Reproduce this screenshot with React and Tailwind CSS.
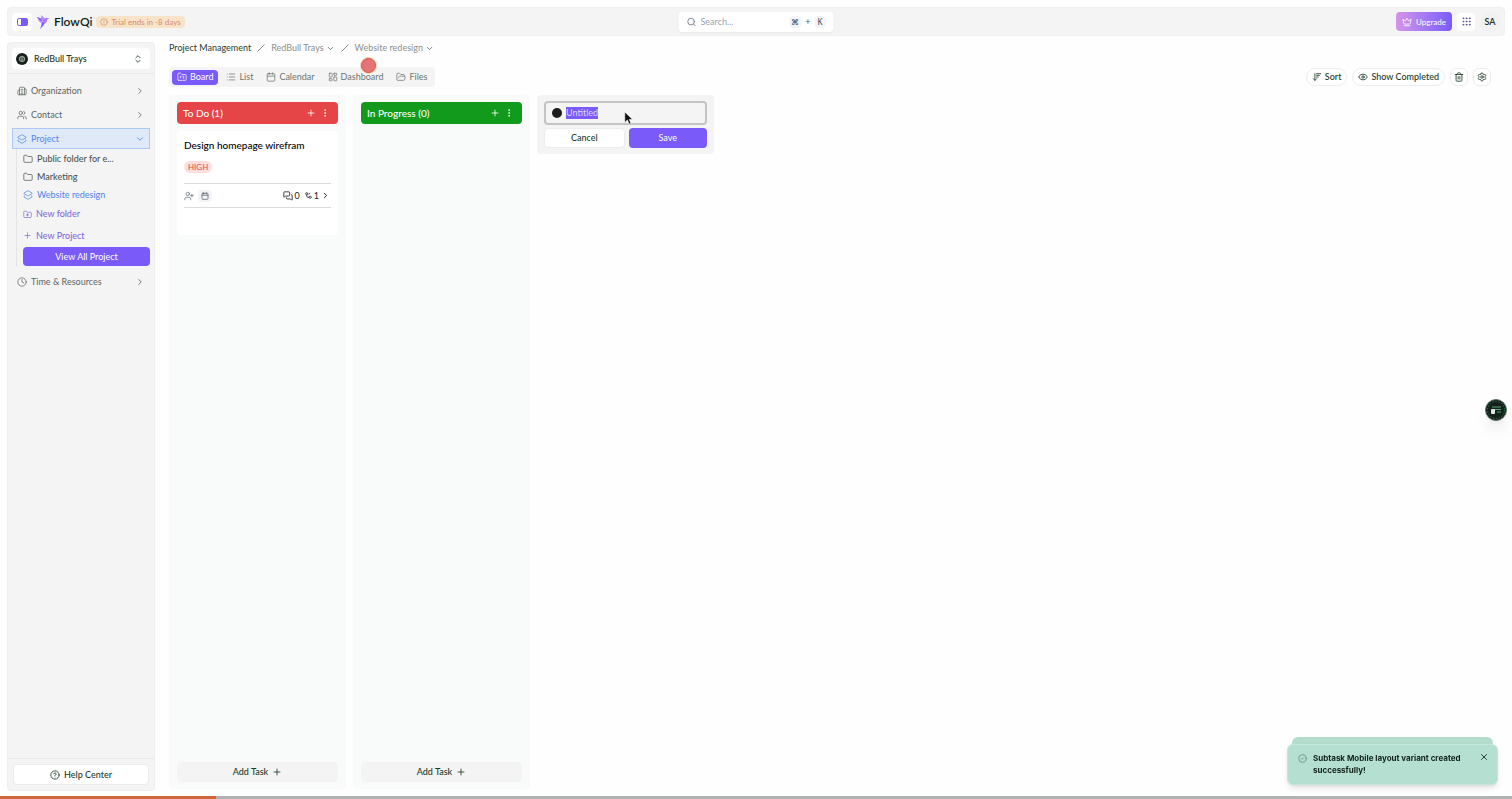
import {
  ArrowDownWideNarrow,
  Calendar,
  ChevronDown,
  ChevronRight,
  ChevronsUpDown,
  CircleAlert,
  CircleCheck,
  CircleHelp,
  Clock,
  Crown,
  EllipsisVertical,
  Eye,
  Folder,
  FolderKanban,
  FolderOpen,
  FolderPlus,
  Grip,
  Layers2,
  LayoutDashboard,
  List,
  MessagesSquare,
  Plus,
  Search,
  Settings,
  Trash2,
  UserPlus,
  Users,
  Building2,
  X,
} from "lucide-react";

const tabs = [
  { label: "Board", icon: FolderKanban, active: true },
  { label: "List", icon: List },
  { label: "Calendar", icon: Calendar },
  { label: "Dashboard", icon: LayoutDashboard },
  { label: "Files", icon: FolderOpen },
];

const Logo = () => (
  <svg viewBox="0 0 24 24" className="w-[14px] h-[14px]" aria-hidden="true">
    <path d="M1 3l8 3 3 5-6-1z" fill="#8b5cf6" />
    <path d="M3 9l6 1 4 4-5-1z" fill="#c084fc" />
    <path d="M9 0l6 6-2 6-4-5z" fill="#a78bfa" />
    <path d="M13 9c1-3 4-5 6-4l4 1-4 2c0 4-2 6-5 7l-4-2z" fill="#b07cf5" />
    <path d="M10 12l5 2-3 5-5 5 2-6z" fill="#7c5cfc" />
  </svg>
);

const Navbar = () => (
  <header className="relative flex items-center justify-between h-[29px] rounded-sm bg-[#f4f4f4] border border-[#f0f0f0] px-1">
    <div className="flex items-center">
      <button aria-label="Toggle sidebar" className="flex items-center justify-center w-5 h-[18px] rounded-sm bg-white">
        <svg viewBox="0 0 22 16" className="w-[11px] h-2" aria-hidden="true">
          <rect x="1" y="1" width="20" height="14" rx="3" fill="#fff" stroke="#7a5af8" strokeWidth="2" />
          <path d="M8 1h10a3 3 0 0 1 3 3v8a3 3 0 0 1-3 3H8z" fill="#7a5af8" />
        </svg>
      </button>
      <a href="#" className="flex items-center gap-1 ml-1 text-[12px] font-semibold text-[#0d1f14]">
        <Logo />
        FlowQi
      </a>
      <span className="flex items-center gap-[3px] h-3 ml-1 px-1 rounded-sm bg-[#f6e3c8] text-[8px] text-[#d98a6a]">
        <CircleAlert className="w-2 h-2" />
        Trial ends in -8 days
      </span>
    </div>

    {/* Search */}
    <label className="absolute left-1/2 -translate-x-1/2 flex items-center gap-1 w-[155px] h-5 px-2 rounded-sm bg-white shadow-xs">
      <Search className="w-[10px] h-[10px] text-gray-500 shrink-0" />
      <input placeholder="Search..." aria-label="Search" className="w-full min-w-0 outline-none placeholder:text-gray-400" />
      <kbd className="px-[2px] rounded-sm bg-gray-100 font-sans text-[8px] text-gray-700">⌘</kbd>
      <span className="text-gray-600">+</span>
      <kbd className="px-[3px] rounded-sm bg-gray-100 font-sans text-[8px] text-gray-700">K</kbd>
    </label>

    <div className="flex items-center gap-[5px]">
      <button className="flex items-center justify-center gap-1 w-14 h-[19px] rounded-sm bg-linear-to-r from-[#d494ea] to-[#7a5af8] text-[8px] text-white">
        <Crown className="w-[10px] h-[10px]" />
        Upgrade
      </button>
      <button aria-label="Apps" className="flex items-center justify-center w-[18px] h-[18px] rounded-sm bg-white text-[#5b4a94]">
        <Grip className="w-[11px] h-[11px]" />
      </button>
      <button className="flex items-center justify-center w-5 h-5 rounded-full bg-[#f1f1f1] font-semibold text-[#16301c]">SA</button>
    </div>
  </header>
);

const NavRow = ({ icon: Icon, label, active }) => (
  <button
    className={
      active
        ? "flex items-center gap-1 w-full h-[21px] px-1 border border-[#a9c8f5] bg-[#dfe9f8] text-[#5287e6]"
        : "flex items-center gap-1 w-full h-[21px] px-1 border border-transparent text-[#5d655f]"
    }
  >
    <Icon className="w-[10px] h-[10px]" strokeWidth={1.75} />
    <span>{label}</span>
    {active ? <ChevronDown className="w-[10px] h-[10px] ml-auto" /> : <ChevronRight className="w-[10px] h-[10px] ml-auto" />}
  </button>
);

const Sidebar = () => (
  <aside className="flex flex-col w-[148px] shrink-0 rounded-sm bg-[#f4f4f4] border border-[#eeeeee]">
    <div className="px-1 pt-[5px] pb-1 border-b border-[#e9e9e9]">
      <button className="flex items-center w-full h-[21px] px-1 rounded-sm bg-white text-[#1d3a25] font-medium">
        <svg viewBox="0 0 24 24" className="w-3 h-3 mr-[6px]" aria-hidden="true">
          <circle cx="12" cy="12" r="12" fill="#17211b" />
          <circle cx="12" cy="12" r="5.5" fill="none" stroke="#b8c9be" strokeWidth="1.5" />
          <path d="M7 10h10M7 14h10M12 7v10" stroke="#b8c9be" strokeWidth="1.3" />
        </svg>
        RedBull Trays
        <ChevronsUpDown className="w-[10px] h-[10px] ml-auto mr-[3px]" />
      </button>
    </div>

    <nav className="flex flex-col gap-[3px] px-1 pt-[6px]">
      <NavRow icon={Building2} label="Organization" />
      <NavRow icon={Users} label="Contact" />
      <NavRow icon={Layers2} label="Project" active />
      <div className="flex flex-col -mt-[3px] mb-[2px] ml-1 pl-[6px] border-l border-[#e4e4e4] text-[#7a62d8]">
        <a href="#" className="flex items-center gap-1 h-[19px] font-medium text-[#4c554f]">
          <Folder className="w-[10px] h-[10px]" strokeWidth={1.75} />
          Public folder for e...
        </a>
        <a href="#" className="flex items-center gap-1 h-[18px] font-medium text-[#4c554f]">
          <Folder className="w-[10px] h-[10px]" strokeWidth={1.75} />
          Marketing
        </a>
        <a href="#" className="flex items-center gap-1 h-[18px] text-[#4c86ea]">
          <Layers2 className="w-[10px] h-[10px]" strokeWidth={1.75} />
          Website redesign
        </a>
        <button className="flex items-center gap-1 h-5">
          <FolderPlus className="w-[9px] h-[9px]" strokeWidth={1.75} />
          New folder
        </button>
        <button className="flex items-center gap-1 h-[23px]">
          <Plus className="w-[9px] h-[9px]" strokeWidth={1.75} />
          New Project
        </button>
        <button className="h-[19px] rounded-sm bg-[#7a5af8] text-white">View All Project</button>
      </div>
      <NavRow icon={Clock} label="Time & Resources" />
    </nav>

    <div className="mt-auto p-[5px] border-t border-[#e9e9e9]">
      <button className="flex items-center justify-center gap-1 w-full h-[21px] rounded-sm border border-[#ececec] bg-white font-medium text-[#1d3a25]">
        <CircleHelp className="w-[10px] h-[10px]" />
        Help Center
      </button>
    </div>
  </aside>
);

const Slash = () => (
  <svg viewBox="0 0 8 8" className="w-2 h-2 mx-[6px]" aria-hidden="true">
    <path d="M0.5 7.5l7-7" stroke="#8a8f8b" strokeWidth="1" />
  </svg>
);

const Subtasks = () => (
  <svg viewBox="0 0 14 14" className="w-[7px] h-[7px] ml-[5px]" fill="none" stroke="currentColor" strokeWidth="1.6" aria-hidden="true">
    <circle cx="3.5" cy="3.5" r="2.2" />
    <circle cx="10.5" cy="10.5" r="2.2" />
    <path d="M3.500 6v2.500a2 2 0 0 0 2 2h2.500M10 1.500L7.500 5" />
  </svg>
);

const Column = ({ title, color, children }) => (
  <section className="flex flex-col w-[177px] shrink-0 px-2 py-[7px] rounded-sm bg-[#f9fafa]">
    <div className={`flex items-center h-[22px] pl-[6px] pr-2 rounded-sm text-[10px] font-medium text-white ${color}`}>
      <h2>{title}</h2>
      <button aria-label="Add task" className="ml-auto">
        <Plus className="w-[10px] h-[10px]" />
      </button>
      <button aria-label="Column menu" className="ml-1">
        <EllipsisVertical className="w-[10px] h-[10px]" />
      </button>
    </div>
    {children}
    <button className="flex items-center justify-center gap-1 h-5 mt-auto rounded-sm bg-[#f4f4f4] font-medium text-[#1d3a25]">
      Add Task
      <Plus className="w-[10px] h-[10px]" />
    </button>
  </section>
);

const TaskCard = () => (
  <article className="h-[104px] mt-[7px] px-[7px] pt-[7px] rounded-sm bg-white">
    <h3 className="text-[10px] leading-[14px] font-medium whitespace-nowrap text-black">Design homepage wirefram</h3>
    <div className="flex mt-[9px]">
      <span className="flex items-center h-3 px-1 rounded-full bg-[#fddede] text-[8px] text-[#e5484d]">HIGH</span>
    </div>
    <div className="flex items-center h-[25px] mt-[10px] pr-px border-y border-[#dcdcdc] text-[#1c1c1c]">
      <button aria-label="Assign" className="text-gray-600">
        <UserPlus className="w-[10px] h-[10px]" strokeWidth={1.5} />
      </button>
      <button aria-label="Due date" className="flex items-center justify-center w-[14px] h-3 ml-1 rounded-sm bg-gray-100 text-gray-600">
        <Calendar className="w-2 h-2" />
      </button>
      <MessagesSquare className="w-[10px] h-[10px] ml-auto" />
      <span className="ml-[2px]">0</span>
      <Subtasks />
      <span className="ml-[2px]">1</span>
      <ChevronRight className="w-[9px] h-[9px] ml-[2px]" strokeWidth={2.5} />
    </div>
  </article>
);

const NewColumn = () => (
  <form className="w-[177px] shrink-0 self-start px-[7px] py-[6px] rounded-sm bg-[#f4f4f4]">
    <label className="flex items-center gap-1 h-6 px-[6px] rounded-sm border-2 border-[#c3c3c3]">
      <span className="w-[10px] h-[10px] rounded-full bg-[#1c1c1c] shrink-0" />
      <input
        defaultValue="Untitled"
        aria-label="Column name"
        autoFocus
        onFocus={(e) => e.target.select()}
        className="w-full min-w-0 bg-transparent outline-none text-[#1c1c1c] selection:bg-[#7a5af8] selection:text-[#ddd5fb]"
      />
    </label>
    <div className="flex gap-1 mt-[3px]">
      <button type="button" className="flex-1 h-5 rounded-sm border border-[#ededed] bg-white font-medium text-[#1d3a25]">
        Cancel
      </button>
      <button type="button" className="flex-1 h-5 rounded-sm bg-[#7a5af8] text-white">
        Save
      </button>
    </div>
  </form>
);

const Toast = () => (
  <div className="fixed right-[14px] bottom-[14px] w-[211px]">
    <div className="h-[7px] mx-[5px] rounded-t-md bg-[#b3dccd]" />
    <div role="status" className="flex items-start h-[41px] pt-[7px] pl-[10px] pr-2 rounded-md border border-[#c3e6da] bg-[#b5dfd1] shadow-md font-[Inter,sans-serif] text-[8px] leading-3 font-bold text-[#10241a]">
      <CircleCheck className="w-[9px] h-[9px] mt-[2px] mr-[6px] shrink-0 text-[#668a7b]" />
      <p>Subtask Mobile layout variant created successfully!</p>
      <button aria-label="Close" className="ml-auto">
        <X className="w-[10px] h-[10px]" />
      </button>
    </div>
  </div>
);

const App = () => {
  return (
    <div className="flex flex-col gap-[6px] h-screen p-[7px] bg-[#fefefe] font-[Lato,sans-serif] text-[9px] leading-3 overflow-hidden">
      <Navbar />
      <div className="flex flex-1 min-h-0 pb-[1px]">
        <Sidebar />
        <main className="flex flex-col flex-1 min-w-0 ml-[14px] pb-[2px]">
          {/* Breadcrumb */}
          <nav aria-label="Breadcrumb" className="flex items-center h-3 text-[#8b918d]">
            <a href="#" className="text-[#26402d]">Project Management</a>
            <Slash />
            <button className="flex items-center gap-[2px]">
              RedBull Trays
              <ChevronDown className="w-[9px] h-[9px] text-gray-600" />
            </button>
            <Slash />
            <button className="flex items-center gap-[2px]">
              Website redesign
              <ChevronDown className="w-[9px] h-[9px] text-gray-600" />
            </button>
          </nav>

          {/* Toolbar */}
          <div className="flex items-center justify-between h-5 mt-[13px] pr-[14px]">
            <div className="flex items-center gap-[3px] h-5 px-[3px] rounded-sm bg-[#f4f4f4] text-[#6d746f]">
              {tabs.map(({ label, icon: Icon, active }) => (
                <button
                  key={label}
                  className={
                    active
                      ? "flex items-center gap-[3px] h-[15px] px-[5px] rounded-sm bg-[#7a5af8] text-white"
                      : "flex items-center gap-[3px] h-[15px] px-[5px]"
                  }
                >
                  <Icon className="w-[10px] h-[10px]" strokeWidth={1.75} />
                  {label}
                </button>
              ))}
            </div>
            <div className="flex items-center gap-[5px] font-medium text-[#1d3a25]">
              <button className="flex items-center gap-[3px] h-[18px] px-[5px] rounded-full border border-[#ededed] bg-white">
                <ArrowDownWideNarrow className="w-[10px] h-[10px]" />
                Sort
              </button>
              <button className="flex items-center gap-[3px] h-[18px] px-[5px] rounded-full border border-[#ededed] bg-white">
                <Eye className="w-[10px] h-[10px]" />
                Show Completed
              </button>
              <button aria-label="Trash" className="flex items-center justify-center w-[18px] h-[18px] rounded-md border border-[#ededed] bg-white">
                <Trash2 className="w-[10px] h-[10px]" />
              </button>
              <button aria-label="Settings" className="flex items-center justify-center w-[18px] h-[18px] rounded-md border border-[#ededed] bg-white">
                <Settings className="w-[10px] h-[10px]" />
              </button>
            </div>
          </div>

          {/* Board */}
          <div className="flex flex-1 min-h-0 gap-[7px] mt-2">
            <Column title="To Do (1)" color="bg-[#e54547]">
              <TaskCard />
            </Column>
            <Column title="In Progress (0)" color="bg-[#119a1b]" />
            <NewColumn />
          </div>
        </main>
      </div>

      <Toast />

      {/* Assistant launcher */}
      <button aria-label="Assistant" className="fixed right-[5px] top-[399px] rounded-full shadow-lg">
        <svg viewBox="0 0 22 22" className="w-[22px] h-[22px]" aria-hidden="true">
          <circle cx="11" cy="11" r="10.5" fill="#14211a" stroke="#5d7567" />
          <circle cx="11" cy="11" r="8.5" fill="none" stroke="#3f7a55" strokeWidth="0.8" strokeDasharray="1.5 1.5" />
          <path d="M7 8h9M9 10.500h7M12 13h4" stroke="#56a573" strokeWidth="1" />
          <rect x="6" y="10" width="4" height="5" rx="1" fill="#dfe9e3" />
        </svg>
      </button>

      {/* Click marker and pointer */}
      <span className="fixed left-[361px] top-[58px] w-[15px] h-[15px] rounded-full border border-[#d9543f] bg-[#e57478] ring-1 ring-[#f3d9b8]" />
      <svg viewBox="0 0 12 18" className="fixed left-[624px] top-[111px] w-[9px] h-[14px]" aria-hidden="true">
        <path d="M1 1v14l3.500-3.200 2.300 5.200 2.500-1.100-2.300-5H11.500z" fill="#111" stroke="#fff" strokeWidth="0.8" />
      </svg>

      {/* Playback progress */}
      <div className="fixed inset-x-0 bottom-0 h-[3px] bg-[#b0b2b1]">
        <div className="w-1/7 h-full bg-[#d0673c]" />
      </div>
    </div>
  );
};

export default App;
